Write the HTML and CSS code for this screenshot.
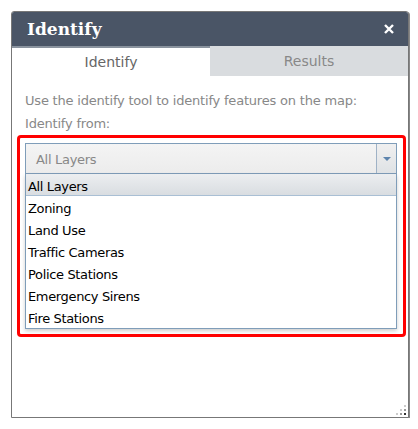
FILE: index.html
```html
<!DOCTYPE html>
<html lang="en">
<head>
  <meta charset="UTF-8" />
  <title>Identify</title>
  <link rel="stylesheet" href="styles.css">
</head>
<body>
  <div class="panel">
    <div class="panel-header">
      <span class="panel-title">Identify</span>
      <svg class="close" width="10" height="10" viewBox="0 0 10 10"><path d="M1 1L9 9M9 1L1 9" stroke="#fff" stroke-width="2.4"/></svg>
    </div>
    <div class="tabs">
      <div class="tab active">Identify</div>
      <div class="tab">Results</div>
    </div>
    <div class="content">
      <p class="intro">Use the identify tool to identify features on the map:</p>
      <p class="label">Identify from:</p>
      <div class="highlight">
        <div class="select">
          <span class="select-value">All Layers</span>
          <span class="select-arrow">
            <svg width="8" height="4" viewBox="0 0 8 4"><path d="M0 0H8L4 4Z" fill="#5d84ad"/></svg>
          </span>
        </div>
        <ul class="options">
          <li class="selected">All Layers</li>
          <li>Zoning</li>
          <li>Land Use</li>
          <li>Traffic Cameras</li>
          <li>Police Stations</li>
          <li>Emergency Sirens</li>
          <li>Fire Stations</li>
        </ul>
      </div>
    </div>
    <svg class="grip" width="10" height="10" viewBox="0 0 10 10">
      <rect x="8" y="0" width="2" height="2" fill="#ccc"/>
      <rect x="4" y="4" width="2" height="2" fill="#ccc"/>
      <rect x="8" y="4" width="2" height="2" fill="#999"/>
      <rect x="0" y="8" width="2" height="2" fill="#ccc"/>
      <rect x="4" y="8" width="2" height="2" fill="#999"/>
      <rect x="8" y="8" width="2" height="2" fill="#333"/>
    </svg>
  </div>
</body>
</html>
```

FILE: styles.css
```css
body {
  margin: 0;
  background: #fff;
  font-family: 'DejaVu Sans', Verdana, sans-serif;
}
.panel {
  position: relative;
  box-sizing: border-box;
  width: 398px;
  height: 407px;
  margin: 11px 0 0 11px;
  border: 1px solid #777;
  border-radius: 3px 3px 0 0;
  box-shadow: 1px 1px 0 #888;
  background: #fff;
}
.panel-header {
  height: 34px;
  background: #4a5566;
  display: flex;
  align-items: center;
  justify-content: space-between;
  padding: 0 14px 0 15px;
  border-radius: 2px 2px 0 0;
}
.panel-title {
  font-family: 'DejaVu Serif', Georgia, serif;
  font-weight: bold;
  font-size: 17px;
  color: #fff;
}
.tabs {
  display: flex;
  height: 30px;
}
.tab {
  flex: 1;
  text-align: center;
  line-height: 30px;
  font-size: 14px;
  color: #888;
  background: #d9dcdf;
}
.tab.active {
  background: #fff;
  color: #666;
  border-top: 2px solid #8a939e;
  line-height: 28px;
}
.content {
  padding: 13px 2px 0 5px;
}
.intro, .label {
  margin: 0 0 0 8px;
  font-size: 13px;
  letter-spacing: -0.2px;
  color: #888;
  line-height: 23px;
}
.highlight {
  border: 3px solid #f00;
  border-radius: 4px;
  padding: 5px 6px 5px 5px;
}
.select {
  display: flex;
  height: 31px;
  box-sizing: border-box;
  border: 1px solid #7f9db9;
  background: linear-gradient(#f4f4f4, #ececec);
}
.select-value {
  flex: 1;
  padding: 2px 0 0 10px;
  line-height: 27px;
  font-size: 13px;
  letter-spacing: -0.3px;
  color: #888;
}
.select-arrow {
  width: 19px;
  border-left: 1px solid #9fb2c6;
  display: flex;
  align-items: center;
  justify-content: center;
  background: linear-gradient(#f0f0f0, #dfe2e5);
}
.options {
  list-style: none;
  margin: 0;
  padding: 0;
  border: 1px solid #7f9db9;
  border-top: none;
  background: #fff;
  box-shadow: 0 2px 4px rgba(0,0,0,0.2);
}
.options li {
  box-sizing: border-box;
  height: 22px;
  padding: 4px 0 0 2px;
  line-height: 18px;
  font-size: 13px;
  letter-spacing: -0.35px;
  color: #000;
}
.options li.selected {
  background: linear-gradient(#eceef0, #d9dde1);
  border-bottom: 1px solid #a9bfd4;
}
.grip {
  position: absolute;
  right: 2px;
  bottom: 2px;
}
```
